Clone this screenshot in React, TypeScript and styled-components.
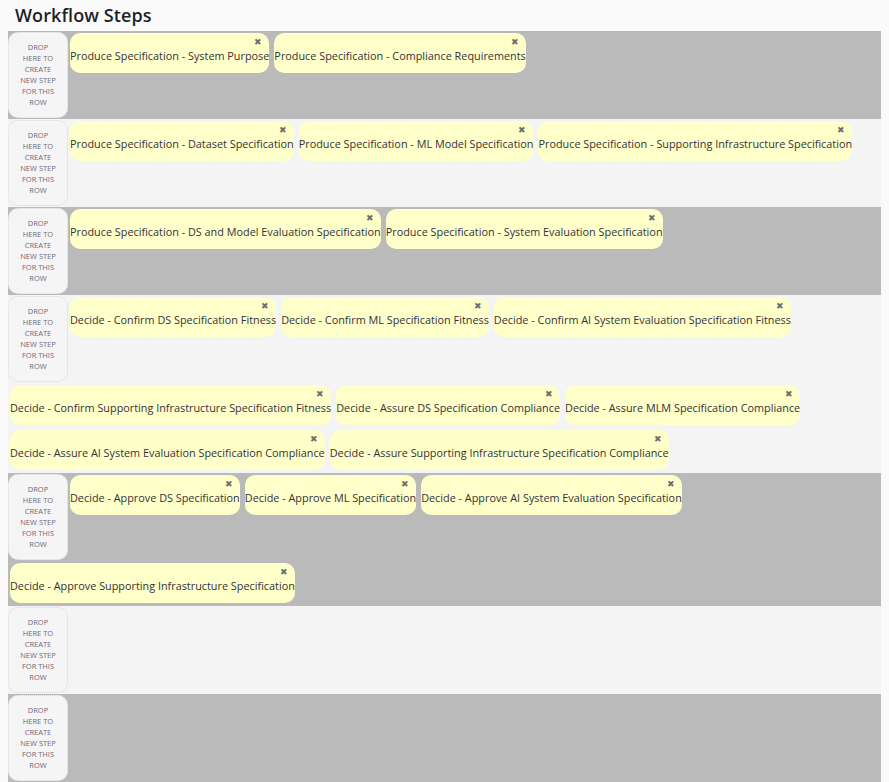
import React from "react";
import styled, { createGlobalStyle } from "styled-components";

const GlobalStyle = createGlobalStyle`
  html, body { margin: 0; padding: 0; background: #fafafa; }
  body { padding: 0 8px; font-family: "Open Sans", "Noto Sans", sans-serif; color: #333; }
  * { box-sizing: border-box; }
`;

const Page = styled.div`
  display: flex;
  flex-direction: column;
`;

const Title = styled.h2`
  margin: 0;
  height: 31px;
  padding-left: 7px;
  font-size: 18px;
  line-height: 31px;
  font-weight: 600;
  color: #1f1f2a;
  letter-spacing: 0.1px;
`;

const Row = styled.div<{ $dark: boolean }>`
  display: flex;
  flex-wrap: wrap;
  align-items: flex-start;
  min-height: 88px;
  background: ${(p) => (p.$dark ? "#bababa" : "#f4f4f4")};
`;

const DropZone = styled.div`
  width: 60px;
  height: 86px;
  margin: 1px 0;
  padding: 0 10px;
  border: 1px dotted #d6d6d6;
  border-radius: 10px;
  background: #f5f5f5;
  color: #6e6a7c;
  font-size: 7.5px;
  line-height: 11px;
  text-align: center;
  text-transform: uppercase;
  display: flex;
  align-items: center;
  justify-content: center;
`;

const Card = styled.div`
  height: 40px;
  margin: 2px 3px 3px 2px;
  padding-top: 3px;
  border-radius: 10px;
  background: #ffffc9;
  display: flex;
  flex-direction: column;
`;

const Close = styled.span`
  align-self: flex-end;
  margin-right: 7px;
  height: 12px;
  font-size: 9px;
  line-height: 12px;
  color: #6e6e6e;
`;

const Label = styled.span`
  font-size: 10.85px;
  line-height: 15px;
  white-space: nowrap;
  color: #34323c;
`;

const rows: string[][] = [
  ["Produce Specification - System Purpose", "Produce Specification - Compliance Requirements"],
  [
    "Produce Specification - Dataset Specification",
    "Produce Specification - ML Model Specification",
    "Produce Specification - Supporting Infrastructure Specification",
  ],
  [
    "Produce Specification - DS and Model Evaluation Specification",
    "Produce Specification - System Evaluation Specification",
  ],
  [
    "Decide - Confirm DS Specification Fitness",
    "Decide - Confirm ML Specification Fitness",
    "Decide - Confirm AI System Evaluation Specification Fitness",
    "Decide - Confirm Supporting Infrastructure Specification Fitness",
    "Decide - Assure DS Specification Compliance",
    "Decide - Assure MLM Specification Compliance",
    "Decide - Assure AI System Evaluation Specification Compliance",
    "Decide - Assure Supporting Infrastructure Specification Compliance",
  ],
  [
    "Decide - Approve DS Specification",
    "Decide - Approve ML Specification",
    "Decide - Approve AI System Evaluation Specification",
    "Decide - Approve Supporting Infrastructure Specification",
  ],
  [],
  [],
];

export default function App() {
  return (
    <Page>
      <GlobalStyle />
      <Title>Workflow Steps</Title>
      {rows.map((steps, i) => (
        <Row key={i} $dark={i % 2 === 0}>
          <DropZone>Drop here to create new step for this row</DropZone>
          {steps.map((s) => (
            <Card key={s}>
              <Close>✖</Close>
              <Label>{s}</Label>
            </Card>
          ))}
        </Row>
      ))}
    </Page>
  );
}
